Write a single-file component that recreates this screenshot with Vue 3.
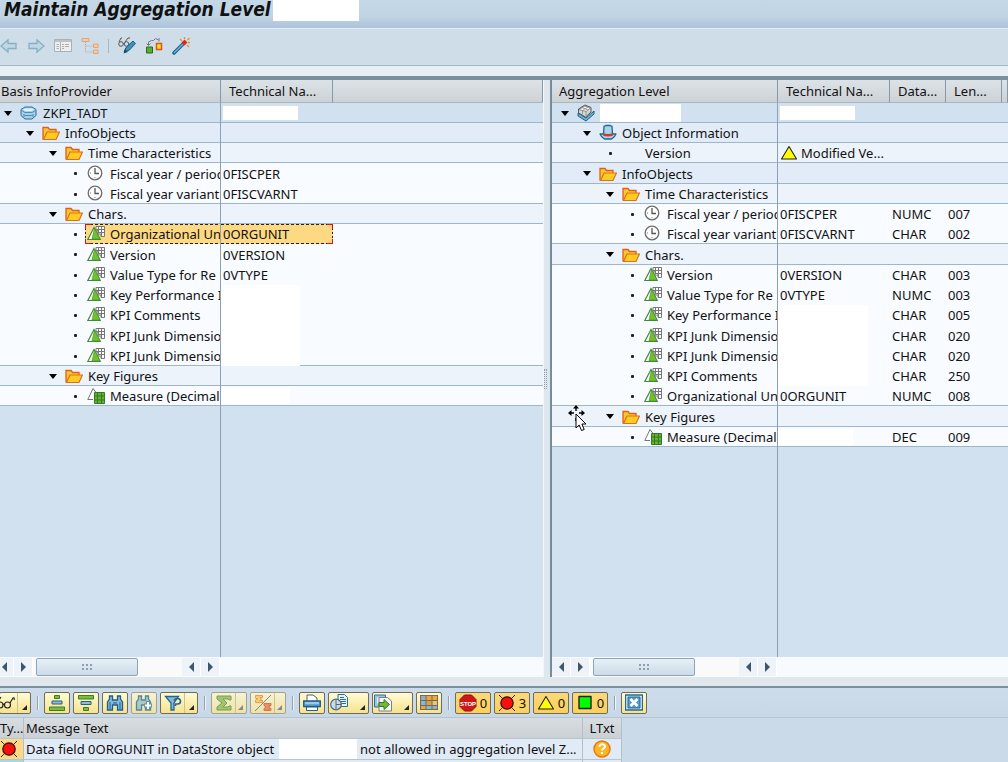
<script setup>
const box = (w, kind = 'fill') => ({ w, kind })

const leftRows = [
  { level: 0, icon: 'cylinder', label: 'ZKPI_TADT', mask: box(75, 'short'), tone: 'root', open: true, line: true },
  { level: 1, icon: 'folder', label: 'InfoObjects', tone: 'branch', open: true, line: true },
  { level: 2, icon: 'folder', label: 'Time Characteristics', tone: 'group', open: true, line: true },
  { level: 3, icon: 'clock', label: 'Fiscal year / period', tech: '0FISCPER' },
  { level: 3, icon: 'clock', label: 'Fiscal year variant', tech: '0FISCVARNT', line: true },
  { level: 2, icon: 'folder', label: 'Chars.', tone: 'group', open: true, line: true },
  { level: 3, icon: 'char', label: 'Organizational Unit', tech: '0ORGUNIT', selected: true },
  { level: 3, icon: 'char', label: 'Version', tech: '0VERSION' },
  { level: 3, icon: 'char', label: 'Value Type for Re', tech: '0VTYPE' },
  { level: 3, icon: 'char', label: 'Key Performance I', mask: box(79) },
  { level: 3, icon: 'char', label: 'KPI Comments', mask: box(79) },
  { level: 3, icon: 'char', label: 'KPI Junk Dimensio', mask: box(79) },
  { level: 3, icon: 'char', label: 'KPI Junk Dimensio', mask: box(79), line: true },
  { level: 2, icon: 'folder', label: 'Key Figures', tone: 'group', open: true, line: true },
  { level: 3, icon: 'measure', label: 'Measure (Decimal', mask: box(69, 'tall'), line: true }
]

const rightRows = [
  { level: 0, icon: 'cube', label: '', labelMask: true, mask: box(75, 'short'), tone: 'root', open: true, line: true },
  { level: 1, icon: 'hat', label: 'Object Information', tone: 'branch', open: true, line: true },
  { level: 2, icon: '', label: 'Version', techIcon: 'warn', tech: 'Modified Ve...', tone: 'group', line: true },
  { level: 1, icon: 'folder', label: 'InfoObjects', tone: 'branch', open: true, line: true },
  { level: 2, icon: 'folder', label: 'Time Characteristics', tone: 'group', open: true, line: true },
  { level: 3, icon: 'clock', label: 'Fiscal year / period', tech: '0FISCPER', type: 'NUMC', len: '007' },
  { level: 3, icon: 'clock', label: 'Fiscal year variant', tech: '0FISCVARNT', type: 'CHAR', len: '002', line: true },
  { level: 2, icon: 'folder', label: 'Chars.', tone: 'group', open: true, line: true },
  { level: 3, icon: 'char', label: 'Version', tech: '0VERSION', type: 'CHAR', len: '003' },
  { level: 3, icon: 'char', label: 'Value Type for Re', tech: '0VTYPE', type: 'NUMC', len: '003' },
  { level: 3, icon: 'char', label: 'Key Performance I', mask: box(90), type: 'CHAR', len: '005' },
  { level: 3, icon: 'char', label: 'KPI Junk Dimensio', mask: box(90), type: 'CHAR', len: '020' },
  { level: 3, icon: 'char', label: 'KPI Junk Dimensio', mask: box(90), type: 'CHAR', len: '020' },
  { level: 3, icon: 'char', label: 'KPI Comments', mask: box(90), type: 'CHAR', len: '250' },
  { level: 3, icon: 'char', label: 'Organizational Unit', tech: '0ORGUNIT', type: 'NUMC', len: '008', line: true },
  { level: 2, icon: 'folder', label: 'Key Figures', tone: 'group', open: true, line: true },
  { level: 3, icon: 'measure', label: 'Measure (Decimal', mask: box(75, 'tall'), type: 'DEC', len: '009', line: true }
]

const panes = [
  { id: 'basis', title: 'Basis InfoProvider', rows: leftRows, heads: ['Technical Na...'], wide: false },
  { id: 'level', title: 'Aggregation Level', rows: rightRows, heads: ['Technical Na...', 'Data...', 'Len...'], wide: true }
]

const topTools = [
  { icon: 'back', name: 'Back', dim: true },
  { icon: 'forward', name: 'Forward', dim: true },
  { icon: 'list', name: 'Overview', dim: true },
  { icon: 'tree', name: 'Hierarchy', dim: true },
  { sep: true },
  { icon: 'edit', name: 'Display / Change' },
  { icon: 'swap', name: 'Where used' },
  { icon: 'wand', name: 'Activate' }
]

const logTools = [
  { icon: 'glasses', name: 'Details', menu: true, lead: true },
  { sep: true },
  { icon: 'asc', name: 'Sort ascending' },
  { icon: 'desc', name: 'Sort descending' },
  { icon: 'find', name: 'Find' },
  { icon: 'findnext', name: 'Find next', dim: true },
  { icon: 'filter', name: 'Filter', menu: true },
  { sep: true },
  { icon: 'sum', name: 'Total', menu: true, dim: true },
  { icon: 'subtotal', name: 'Subtotal', menu: true, dim: true },
  { sep: true },
  { icon: 'print', name: 'Print' },
  { icon: 'view', name: 'Views', menu: true, roomy: true },
  { icon: 'export', name: 'Export', menu: true, roomy: true },
  { icon: 'layout', name: 'Layout' },
  { sep: true },
  { icon: 'stop', name: 'Terminations', count: '0' },
  { icon: 'error', name: 'Errors', count: '3' },
  { icon: 'warn', name: 'Warnings', count: '0' },
  { icon: 'ok', name: 'Successes', count: '0' },
  { sep: true },
  { icon: 'close', name: 'Close' }
]
</script>

<template>
  <div class="window">
    <svg class="sprite" aria-hidden="true">
      <defs>
        <symbol id="back" viewBox="0 0 18 18"><path d="M1 9l7-6v3.500h8v5H8V15z" fill="#bfd8e4" stroke="#7facc0" stroke-width="1.300" /></symbol>
        <symbol id="forward" viewBox="0 0 18 18"><path d="M17 9l-7-6v3.500H2v5h8V15z" fill="#bfd8e4" stroke="#7facc0" stroke-width="1.300" /></symbol>
        <symbol id="list" viewBox="0 0 18 18"><path d="M.5 2.500h17v12H.5z" fill="#f1f2f2" stroke="#a3adb4" /><path d="M1 4h16" stroke="#b9c0c5" stroke-width="2" /><path d="M6.500 5v9" stroke="#a3adb4" /><path d="M2.500 7.500h2.500M2.500 9.500h2.500M2.500 11.500h2.500M8 7.500h2M11 7.500h4M8 9.500h2M11 9.500h4M8 11.500h2" stroke="#a9a9a9" /></symbol>
        <symbol id="tree" viewBox="0 0 18 18"><path d="M4.500 5v10h7M4.500 9h7" fill="none" stroke="#a9a9a9" stroke-dasharray="1 1" /><path d="M1 1.500h7v3H1zM12.500 7h4.500v3.500h-4.500zM12.500 13h4.500v3.500h-4.500z" fill="#f5cf8d" stroke="#e39c80" /></symbol>
        <symbol id="edit" viewBox="0 0 18 18"><g fill="none" stroke="#555"><circle cx="3" cy="7" r="2.300" /><circle cx="8.500" cy="7" r="2.300" /><path d="M1 5l2-4h1M7 5l3-4h2M5.300 6.500h1" /></g><path d="M6 14.500l2-4L15 4l2.500 2.500-6.500 7z" fill="#3f8fbd" stroke="#1d5f86" /><path d="M5.500 16.500l1.500-4 3 2.500z" fill="#1d4a68" /></symbol>
        <symbol id="swap" viewBox="0 0 18 18"><path d="M1.500 10h6v6h-6z" fill="#5cab2c" stroke="#286a1b" /><path d="M11.500 6.500h5v6h-5z" fill="#ffe11f" stroke="#e0531d" stroke-width="1.500" /><path d="M3.500 8V5l3-1.500h2l2-2 3 1.500M14 4.500V1M3.500 8.500l-2-2M3.500 8.500l2-2" fill="none" stroke="#777" /></symbol>
        <symbol id="wand" viewBox="0 0 18 18"><path d="M2 16L12 6" stroke="#205f89" stroke-width="3.500" stroke-linecap="round" /><path d="M2 16L11 7" stroke="#6bb2d9" stroke-width="1.400" /><path d="M11 7l3-3" stroke="#d92a1c" stroke-width="4" /><path d="M8 2l2 2M12.500 0v2M17.500 1l-2 2M16 5.500h2M15 8l2 2" stroke="#f08c22" stroke-width="1.300" /></symbol>

        <symbol id="cylinder" viewBox="0 0 18 18"><path d="M5 3h7l4 2.500v6L12 15H5l-4-3.500v-6z" fill="#a5d0e8" stroke="#2c6f99" stroke-linejoin="round" /><path d="M3 5.500l2-1h7l2 1-2 1.500H5z" fill="#e2f2fa" /><path d="M1.500 6.500L5 8.500h7l3.500-2M4 10v3M13 10v3M4.500 11.500h8" fill="none" stroke="#4d8fb8" /></symbol>
        <symbol id="folder" viewBox="0 0 18 18"><path d="M1 15.500V3.500h5l1.500 2H14V8" fill="#ffc62c" stroke="#d9601d" stroke-width="1.300" /><path d="M1.500 15.500L5 8h12.500L14 15.500z" fill="#ffcb22" stroke="#d9701d" stroke-width="1.200" /></symbol>
        <symbol id="clock" viewBox="0 0 18 18"><circle cx="8" cy="8" r="6.800" fill="#fff" stroke="#6c6c6c" stroke-width="1.300" /><path d="M8 3v5.500h4" fill="none" stroke="#555" stroke-width="1.300" /><path d="M8 13v-1M3 8h1" stroke="#777" /></symbol>
        <symbol id="char" viewBox="0 0 18 18"><path d="M9 1.500h8.500v10H14V9h-3V5H9z" fill="#fff" stroke="#777" /><path d="M11.500 1v6M14.500 1v10M9 4.500h8M11 7.500h7" stroke="#777" /><path d="M7 2.500L.8 14.500h12.400z" fill="#fff" stroke="#3f8a35" stroke-width="1.200" /><path d="M7.500 3L5 14h8z" fill="#72c02c" stroke="#3f8a35" stroke-width=".6" /></symbol>
        <symbol id="measure" viewBox="0 0 18 18"><path d="M9 5.500L6 1.500.8 12.500H6" fill="#fff" stroke="#767676" /><path d="M7.500 5.500h10v11h-10z" fill="#63b32c" stroke="#34782a" /><path d="M10.500 5v12M14.500 5v12M7 9h11M7 13h11" stroke="#34782a" /></symbol>
        <symbol id="cube" viewBox="0 0 18 18"><path d="M1 9l8 5 8-7v3l-8 7-8-5z" fill="#6bb2dc" stroke="#1d5f86" /><path d="M1.500 5L8 1l6 2.500V8l-5.500 5-7-4z" fill="#d6d6d6" stroke="#555" /><path d="M2 5.500L8 2l5.500 2L9 7.500z" fill="#fafafa" stroke="#777" stroke-width=".8" /><path d="M9 7.500V12M5 3.500L11 6M11 3L5.500 6.500V10" fill="none" stroke="#888" stroke-width=".8" /></symbol>
        <symbol id="hat" viewBox="0 0 18 18"><path d="M1 10h16l-1.500 2.500-3 2.500h-7l-3-2.500z" fill="#a6d4ec" stroke="#20678f" stroke-width="1.300" stroke-linejoin="round" /><path d="M4.500 10L5 2.500l2-1h4l2 1 .500 7.500q-4.500 2-9 0z" fill="#a6d4ec" stroke="#20678f" stroke-width="1.300" /><path d="M4 9q5 2 10 0v2.500q-5 2-10 0z" fill="#d23a25" /></symbol>
        <symbol id="warn" viewBox="0 0 18 18"><path d="M9 2.500L1.500 15h15z" fill="#ff0" stroke="#222" stroke-width="1.100" stroke-linejoin="round" /></symbol>

        <symbol id="glasses" viewBox="0 0 18 18"><g fill="none" stroke="#222" stroke-width="1.100"><circle cx="3" cy="11" r="3" /><circle cx="10.500" cy="11" r="3" /><path d="M6 11q1-2 1.500 0M0 9l4-6M13 9l3-5q2-1 1 2" /></g></symbol>
        <symbol id="asc" viewBox="0 0 18 18"><path d="M6.500 1.500h5v3h-5zM1.500 13h15v3.500h-15z" fill="#7dbb3a" stroke="#3e7c28" /><path d="M4 7h10v3H4z" fill="#8dbbd9" stroke="#285f88" /></symbol>
        <symbol id="desc" viewBox="0 0 18 18"><path d="M1.500 1.500h15V5h-15zM6.500 13.500h5v3h-5z" fill="#7dbb3a" stroke="#3e7c28" /><path d="M4 7.500h10v3H4z" fill="#8dbbd9" stroke="#285f88" /></symbol>
        <symbol id="find" viewBox="0 0 18 18"><path d="M1.500 16V8l2-3V2h3v4h5V2h3v3l2 3v8h-5v-5h-5v5z" fill="#86b9dc" stroke="#1f5e8a" stroke-width="1.300" /><path d="M4 8v7M14 8v7M7 9h4" stroke="#1f5e8a" /></symbol>
        <symbol id="findnext" viewBox="0 0 18 18"><path d="M1.500 16V8l2-3V2h3v4h4V2h3v3l2 3v8h-5v-5h-4v5z" fill="#a9c8cc" stroke="#568692" stroke-width="1.300" /><path d="M13 7v9M9 11.500h8" stroke="#6b949a" stroke-width="4" /><path d="M13 8v7M10 11.500h6" stroke="#fff" stroke-width="2" /></symbol>
        <symbol id="filter" viewBox="0 0 18 18"><path d="M1.500 2.500h13L10 9v7H7V9z" fill="#85b7dc" stroke="#24658f" stroke-width="1.300" /><path d="M10 6.500q1-2 3.500-2c4 0 4 5.500 0 5.500h-2v2" fill="none" stroke="#24658f" stroke-width="1.600" /></symbol>
        <symbol id="sum" viewBox="0 0 18 18"><path d="M2 2h14v4h-2l-1-1H8l4 4-4 4h5l1-1h2v4H2v-3l5-4-5-4z" fill="#a3c46e" stroke="#76a055" /></symbol>
        <symbol id="subtotal" viewBox="0 0 18 18"><path d="M1 17L17 1" stroke="#888" /><path d="M1.500 1.500h7v2H6L7.500 5 6 6.500h2.500v2h-7V6l2-1-2-1z" fill="#f8cd70" stroke="#e49a5b" /><path d="M10 9.500h7v2h-2l1 1.500-1 1.500h2v2h-7v-2l2-1.500-2-1.500z" fill="#eb8d62" stroke="#cf7754" /></symbol>
        <symbol id="print" viewBox="0 0 18 18"><path d="M4 7V1h6l4 3v3" fill="#fff" stroke="#54616b" /><path d="M.7 7h16.600v5.500H.7z" fill="#65a6d0" stroke="#1e5c87" stroke-width="1.300" /><path d="M2 9h14" stroke="#d4ebf8" /><path d="M3.500 13h11v3.500h-11z" fill="#fff" stroke="#1e5c87" /></symbol>
        <symbol id="view" viewBox="0 0 18 18"><path d="M8 .5h6.500l3 3v9H8z" fill="#e5f2fa" stroke="#2c6e98" /><path d="M10 3.500h4M10 5.500h6M10 7.500h6M10 9.500h6" stroke="#2c6e98" /><circle cx="6" cy="10.500" r="5.300" fill="#c9dbe7" stroke="#536c7b" stroke-width="1.200" /><path d="M6 5.500v10M6 10.500h5" stroke="#536c7b" /></symbol>
        <symbol id="export" viewBox="0 0 18 18"><path d="M.5 1h11v12H.5z" fill="#9cc6df" stroke="#2c6e98" /><path d="M3 3.500h6v6H3z" fill="#e6f2f9" /><path d="M5 3.500h8.500l4 3.500v10H5z" fill="#f6f7f8" stroke="#75818a" /><path d="M5 8.500h5V5.500l5.500 5-5.500 5v-3H5z" fill="#72b936" stroke="#357725" /></symbol>
        <symbol id="layout" viewBox="0 0 18 18"><path d="M0 1h18v15H0z" fill="#6d6b66" /><path d="M1 2h4.500v4H1zM12.500 12H17v3h-4.500z" fill="#9cadb6" /><path d="M6.500 2h5v4h-5zM12.500 2H17v4h-4.500zM1 12h4.500v3H1z" fill="#f2a638" /><path d="M1 7h4.500v4H1zM6.500 12h5v3h-5z" fill="#86b8d5" /><path d="M6.500 7h5v4h-5z" fill="#dca33b" /><path d="M12.500 7H17v4h-4.500z" fill="#e9c765" /></symbol>
        <symbol id="stop" viewBox="0 0 18 18"><path d="M5.500 1h7L17 5.500v7L12.500 17h-7L1 12.500v-7z" fill="#cf1717" stroke="#8d0d0d" /><text x="9" y="11.500" text-anchor="middle" font-family="Liberation Sans, sans-serif" font-size="6" font-weight="700" fill="#fff">STOP</text></symbol>
        <symbol id="error" viewBox="0 0 18 18"><path d="M1 1l16 16M17 1L1 17" stroke="#222" /><circle cx="9" cy="9" r="7.500" fill="#fbd77e" /><circle cx="9" cy="9" r="6.200" fill="#fa0f0f" stroke="#2a1010" stroke-width="1.200" /></symbol>
        <symbol id="ok" viewBox="0 0 18 18"><path d="M3 2.500h12v12H3z" fill="#0f0" stroke="#222" stroke-width="1.400" stroke-linejoin="round" /></symbol>
        <symbol id="close" viewBox="0 0 18 18"><path d="M.5 1h17v15H.5z" fill="#d8e8f3" stroke="#246995" stroke-width="1.300" /><path d="M3 3h12v11H3z" fill="#5c9cc8" stroke="#246995" /><path d="M5.500 5l7 7M12.500 5l-7 7" stroke="#fff" stroke-width="2.500" /></symbol>
        <symbol id="help" viewBox="0 0 18 18"><circle cx="9" cy="9" r="8" fill="#ffb51e" stroke="#e5761a" stroke-width="1.500" /><path d="M6.500 7c0-3.500 5.500-3.500 5.500-.5 0 2-3 2-3 4" fill="none" stroke="#fff" stroke-width="2" /><path d="M9 12v2" stroke="#fff" stroke-width="2" /></symbol>
      </defs>
    </svg>

    <header class="titlebar">
      <h1>Maintain Aggregation Level</h1>
      <span class="title-mask"></span>
    </header>

    <nav class="toolbar" aria-label="Application">
      <template v-for="(t, i) in topTools" :key="i">
        <span v-if="t.sep" class="tool-sep"></span>
        <button v-else type="button" class="tool" :aria-label="t.name" :disabled="t.dim">
          <svg><use :href="'#' + t.icon" /></svg>
        </button>
      </template>
    </nav>
    <div class="band"></div>

    <main class="panes">
      <template v-for="(p, n) in panes" :key="p.id">
        <div v-if="n" class="splitter"><span class="grip"></span></div>
        <section class="pane" :class="{ wide: p.wide }">
          <table class="grid">
            <colgroup>
              <col class="c-name" />
              <col class="c-tech" />
              <col v-if="p.wide" class="c-small" />
              <col v-if="p.wide" class="c-small" />
              <col />
            </colgroup>
            <thead>
              <tr>
                <th scope="col" class="h-first">{{ p.title }}</th>
                <th v-for="h in p.heads" :key="h" scope="col">{{ h }}</th>
                <td></td>
              </tr>
            </thead>
            <tbody>
              <tr v-for="(r, i) in p.rows" :key="i" :class="[r.tone, { line: r.line, selected: r.selected }]">
                <td class="name">
                  <div class="node" :class="'lv' + r.level">
                    <button v-if="r.open" type="button" class="twist" :aria-label="'Collapse ' + r.label"></button>
                    <span v-else class="dot"></span>
                    <span class="entry">
                      <span class="slot"><svg v-if="r.icon"><use :href="'#' + r.icon" /></svg></span>
                      <span v-if="r.labelMask" class="label-mask"></span>
                      <span v-else class="label">{{ r.label }}</span>
                    </span>
                  </div>
                </td>
                <td class="tech">
                  <span v-if="r.mask" class="mask" :class="r.mask.kind" :style="{ width: r.mask.w + 'px' }"></span>
                  <span v-else class="value"><svg v-if="r.techIcon"><use :href="'#' + r.techIcon" /></svg>{{ r.tech }}</span>
                </td>
                <td v-if="p.wide" class="small">{{ r.type }}</td>
                <td v-if="p.wide" class="small">{{ r.len }}</td>
                <td></td>
              </tr>
            </tbody>
          </table>
          <div class="filler"><span class="rule"></span></div>
          <div class="scroll">
            <button type="button" class="arrow prev" aria-label="Scroll left"></button>
            <button type="button" class="arrow next" aria-label="Scroll right"></button>
            <span class="track"><span class="thumb"><i></i></span></span>
            <button type="button" class="arrow prev" aria-label="Scroll to start"></button>
            <button type="button" class="arrow next" aria-label="Scroll to end"></button>
          </div>
          <svg v-if="p.wide" class="pointer" viewBox="0 0 20 28" aria-hidden="true">
            <path d="M8 0l3 3.500H5zM0 8l3.500-3v6zM17 8l-3.500-3v6z" />
            <path d="M8 2v4M2 8h4M11 8h4M8 13v3" stroke="#000" stroke-width="1.400" />
            <path d="M8 9v14l3.200-3 2.300 5.500 2.700-1-2.300-5.500H18z" fill="#fff" stroke="#000" />
          </svg>
        </section>
      </template>
    </main>

    <section class="log">
      <div class="log-tools">
        <template v-for="(t, i) in logTools" :key="i">
          <span v-if="t.sep" class="log-sep"></span>
          <button v-else type="button" class="btn" :class="{ dim: t.dim, menu: t.menu, roomy: t.roomy, counter: t.count, lead: t.lead }" :aria-label="t.name">
            <svg><use :href="'#' + t.icon" /></svg>
            <span v-if="t.count">{{ t.count }}</span>
            <span v-if="t.menu" class="drop"></span>
          </button>
        </template>
      </div>
      <table class="messages">
        <colgroup>
          <col class="m-type" />
          <col class="m-text" />
          <col class="m-long" />
        </colgroup>
        <thead>
          <tr>
            <th scope="col" class="ty">Ty...</th>
            <th scope="col">Message Text</th>
            <th scope="col" class="mid">LTxt</th>
          </tr>
        </thead>
        <tbody>
          <tr>
            <td class="status"><svg><use href="#error" /></svg></td>
            <td>
              <div class="message">
                <span class="msg-a">Data field 0ORGUNIT in DataStore object</span>
                <span class="msg-mask"></span>
                <span class="msg-b">not allowed in aggregation level Z...</span>
              </div>
            </td>
            <td class="mid"><button type="button" class="help" aria-label="Long text"><svg><use href="#help" /></svg></button></td>
          </tr>
          <tr class="next-row"><td></td><td></td><td></td></tr>
        </tbody>
      </table>
    </section>
  </div>
</template>

<style>
html,
body {
  margin: 0;
  background: #cbdae8;
}
</style>

<style scoped>
* {
  box-sizing: border-box;
}
.window {
  height: 100vh;
  display: flex;
  flex-direction: column;
  overflow: hidden;
  background: #cbdae8;
  color: #111;
  font: 13px/20px "Noto Sans", "DejaVu Sans Condensed", sans-serif;
}
.sprite {
  position: absolute;
  width: 0;
  height: 0;
}
button {
  font: inherit;
  color: inherit;
  padding: 0;
  margin: 0;
  border: 0;
  background: none;
}
svg {
  display: block;
  flex: none;
  width: 18px;
  height: 18px;
}

.titlebar {
  flex: none;
  height: 28px;
  display: flex;
  align-items: flex-start;
  gap: 2px;
  padding-left: 4px;
  background: linear-gradient(#c4d8e8, #c0d3e3 60%, #abc2da);
}
h1 {
  margin: 0;
  font-family: "DejaVu Sans Condensed", "DejaVu Sans", sans-serif;
  font-size: 19px;
  line-height: 18px;
  font-weight: 700;
  font-style: italic;
  white-space: nowrap;
}
.title-mask {
  width: 86px;
  height: 21px;
  background: #fff;
}
.toolbar {
  flex: none;
  height: 38px;
  display: flex;
  align-items: center;
  gap: 9px;
  padding-bottom: 3px;
  background: #cfdde9;
  border-top: 1px solid #e4edf5;
  border-bottom: 1px solid #a5b4c1;
}
.tool:disabled {
  opacity: 0.9;
}
.tool-sep {
  width: 1px;
  height: 14px;
  background: #a3bacb;
}
.band {
  flex: none;
  height: 14px;
  background: #e7eff4;
  border-bottom: 4px solid #7b919f;
}

.panes {
  flex: 1;
  min-height: 0;
  display: grid;
  grid-template-columns: minmax(0, 543fr) 9px minmax(0, 456fr);
}
.pane {
  position: relative;
  min-width: 0;
  display: flex;
  flex-direction: column;
  background: #d2e1ef;
}
.splitter {
  display: flex;
  align-items: center;
  background: #dee7ed;
  border-left: 1px solid #f3f7fa;
  border-right: 2px solid #768d9d;
}
.grip {
  width: 3px;
  height: 20px;
  border-left: 1px dotted #8a9daa;
  border-right: 1px dotted #8a9daa;
}
.grid {
  width: 100%;
  flex: none;
  table-layout: fixed;
  border-collapse: separate;
  border-spacing: 0;
}
.c-name {
  width: 221px;
}
.wide .c-name {
  width: 226px;
}
.c-tech {
  width: 112px;
}
.c-small {
  width: 56px;
}
.grid td,
.grid th {
  height: 20px;
  padding: 0;
  overflow: hidden;
  white-space: nowrap;
}
.grid thead th,
.grid thead td {
  height: 23px;
  padding: 0 0 0 8px;
  text-align: left;
  font-weight: 400;
  background: linear-gradient(#dde2e7, #cdd2d7);
  border-right: 1px solid #8799a8;
  border-bottom: 1px solid #aab5be;
}
.grid thead .h-first {
  padding-left: 1px;
}
.wide thead .h-first {
  padding-left: 7px;
}
tbody tr {
  background: #f8fbff;
}
tbody tr.root {
  background: #d2e1f0;
}
tbody tr.branch {
  background: #e2ecf8;
}
tbody tr.group {
  background: #edf3fb;
}
.grid tbody tr:nth-child(4n) td {
  height: 21px;
}
.grid .line td {
  box-shadow: inset 0 -1px #9fb5ca;
}
.grid .name {
  border-right: 1px solid #8d9fb6;
}
.node {
  display: flex;
  align-items: center;
  height: 20px;
  padding-left: 2px;
}
.wide .node {
  padding-left: 7px;
}
.node.lv1 {
  padding-left: 24px;
}
.node.lv2 {
  padding-left: 47px;
}
.node.lv3 {
  padding-left: 69px;
}
.wide .node.lv1 {
  padding-left: 29px;
}
.wide .node.lv2 {
  padding-left: 52px;
}
.wide .node.lv3 {
  padding-left: 74px;
}
.twist,
.dot {
  flex: none;
  width: 12px;
  height: 12px;
  display: grid;
  place-items: center;
}
.twist::before {
  content: "";
  border: 4px solid transparent;
  border-top: 5px solid #000;
  border-bottom: 0;
}
.dot::before {
  content: "";
  width: 3px;
  height: 3px;
  border-radius: 1px;
  background: #222;
}
.entry {
  flex: 1;
  min-width: 0;
  height: 20px;
  display: flex;
  align-items: center;
  margin-left: 4px;
  padding-left: 2px;
}
.slot {
  flex: none;
  width: 18px;
  height: 18px;
  margin-right: 5px;
}
.label {
  line-height: 20px;
}
.label-mask {
  width: 81px;
  height: 18px;
  background: #fff;
}
.tech {
  vertical-align: middle;
}
.value {
  display: flex;
  align-items: center;
  gap: 3px;
  height: 20px;
  padding-left: 2px;
}
.mask {
  display: block;
  background: #fff;
  height: 20px;
}
.mask.short {
  height: 14px;
  margin-left: 2px;
}
.mask.tall {
  height: 16px;
}
tr:nth-child(4n) .mask.fill {
  height: 21px;
}
.grid .small {
  padding-left: 2px;
}
.selected .entry {
  background:
    linear-gradient(#e21212, #e21212) 0 0 / 1px 5px no-repeat,
    linear-gradient(#e21212, #e21212) 0 100% / 1px 5px no-repeat,
    linear-gradient(#e21212, #e21212) 0 0 / 6px 1px no-repeat,
    linear-gradient(#e21212, #e21212) 0 100% / 6px 1px no-repeat,
    repeating-linear-gradient(90deg, #222 0 3px, transparent 3px 5px) 0 0 / 100% 1px no-repeat,
    repeating-linear-gradient(90deg, #222 0 3px, transparent 3px 5px) 0 100% / 100% 1px no-repeat,
    repeating-linear-gradient(#222 0 2px, transparent 2px 4px) 0 0 / 1px 100% no-repeat,
    #fdd983;
}
.selected .tech {
  background:
    linear-gradient(#e21212, #e21212) 100% 0 / 1px 5px no-repeat,
    linear-gradient(#e21212, #e21212) 100% 100% / 1px 5px no-repeat,
    linear-gradient(#e21212, #e21212) 100% 0 / 6px 1px no-repeat,
    linear-gradient(#e21212, #e21212) 100% 100% / 6px 1px no-repeat,
    repeating-linear-gradient(90deg, #222 0 3px, transparent 3px 5px) 0 0 / 100% 1px no-repeat,
    repeating-linear-gradient(90deg, #222 0 3px, transparent 3px 5px) 0 100% / 100% 1px no-repeat,
    repeating-linear-gradient(#222 0 2px, transparent 2px 4px) 100% 0 / 1px 100% no-repeat,
    #fdd983;
}
.filler {
  flex: 1;
  display: flex;
}
.rule {
  width: 221px;
  border-right: 1px solid #8d9fb6;
}
.wide .rule {
  width: 226px;
}
.scroll {
  flex: none;
  height: 20px;
  display: flex;
  align-items: center;
  background: #f7faff;
}
.arrow {
  flex: none;
  width: 19px;
  height: 18px;
  display: grid;
  place-items: center;
  background: #edf3f9;
  border-right: 1px solid #fff;
}
.arrow::before {
  content: "";
  border: 5px solid transparent;
}
.prev::before {
  border-right-color: #40566a;
  border-left: 0;
}
.next::before {
  border-left-color: #40566a;
  border-right: 0;
}
.arrow:first-child {
  margin-left: -5px;
}
.wide .arrow:first-child {
  margin-left: 0;
}
.track {
  width: 149px;
  height: 18px;
  padding-left: 3px;
  background: #fafafa;
}
.thumb {
  width: 102px;
  height: 18px;
  display: grid;
  place-items: center;
  border: 1px solid #8fa5b6;
  border-radius: 2px;
  background: linear-gradient(#e6eff6, #ccdce9);
}
.thumb i {
  width: 10px;
  height: 6px;
  border: 2px dotted #8fa0ad;
  border-width: 2px 0;
}
.pointer {
  position: absolute;
  left: 16px;
  top: 325px;
  width: 20px;
  height: 28px;
}

.log {
  flex: none;
  border-top: 9px solid #e0e8ee;
}
.log-tools {
  height: 32px;
  display: flex;
  align-items: center;
  gap: 3px;
  border-top: 2px solid #7b919f;
  border-bottom: 1px solid #b5c4d2;
  background: linear-gradient(#cddcea, #c8d8e7);
}
.log-sep {
  flex: none;
  width: 2px;
  height: 14px;
  margin: 0 2px 0 3px;
  border-left: 1px solid #92a2ae;
  border-right: 1px solid #eef4f8;
}
.btn {
  flex: none;
  width: 26px;
  height: 22px;
  display: flex;
  align-items: center;
  justify-content: center;
  border: 1px solid #6f6c5a;
  border-radius: 2px;
  background: linear-gradient(#fffbd5, #f6e28d);
}
.btn.menu {
  width: 38px;
  justify-content: flex-start;
  padding-left: 3px;
}
.btn.roomy {
  width: 41px;
  padding-left: 1px;
}
.btn.lead {
  width: 32px;
  padding-left: 0;
  margin-left: -1px;
}
.lead svg {
  margin-left: -3px;
}
.btn.dim {
  border-color: #a4a18c;
  background: linear-gradient(#f6f3d5, #ece2a8);
}
.btn.dim.menu {
  width: 36px;
}
.drop {
  align-self: stretch;
  flex: 1;
  display: flex;
  align-items: flex-end;
  justify-content: flex-end;
  padding: 0 3px 3px 0;
  margin-left: 2px;
  border-left: 1px solid #cfc389;
}
.roomy .drop {
  border-left-color: transparent;
}
.drop::before {
  content: "";
  border-left: 5px solid transparent;
  border-bottom: 5px solid #222;
}
.dim .drop::before {
  border-bottom-color: #888;
}
.btn.counter {
  width: 36px;
  gap: 3px;
  background: linear-gradient(#fbd878, #fccf5c);
}
.messages {
  width: 622px;
  table-layout: fixed;
  border-collapse: separate;
  border-spacing: 0;
}
.m-type {
  width: 24px;
}
.m-text {
  width: 559px;
}
.messages th,
.messages td {
  height: 21px;
  padding: 0 0 0 2px;
  overflow: hidden;
  white-space: nowrap;
  text-align: left;
  font-weight: 400;
  border-right: 1px solid #b4bfc9;
  border-bottom: 1px solid #b7c5d1;
}
.messages th {
  background: linear-gradient(#d8dde2, #cbd0d5);
}
.messages td {
  background: #e1ebf5;
}
.messages .ty {
  padding-left: 0;
}
.messages .mid {
  padding: 0;
  text-align: center;
}
.messages .status {
  padding: 0;
  background: #fdd983;
}
.message {
  display: flex;
  align-items: center;
  height: 20px;
}
.msg-a {
  flex: none;
  width: 253px;
}
.msg-mask {
  flex: none;
  width: 78px;
  height: 20px;
  margin-right: 3px;
  background: #fff;
}
.help {
  display: block;
  margin: 0 auto;
}
.messages .next-row td {
  height: 2px;
  border-bottom: 0;
}
.next-row td:first-child {
  background: #9fdbe6;
}
</style>
